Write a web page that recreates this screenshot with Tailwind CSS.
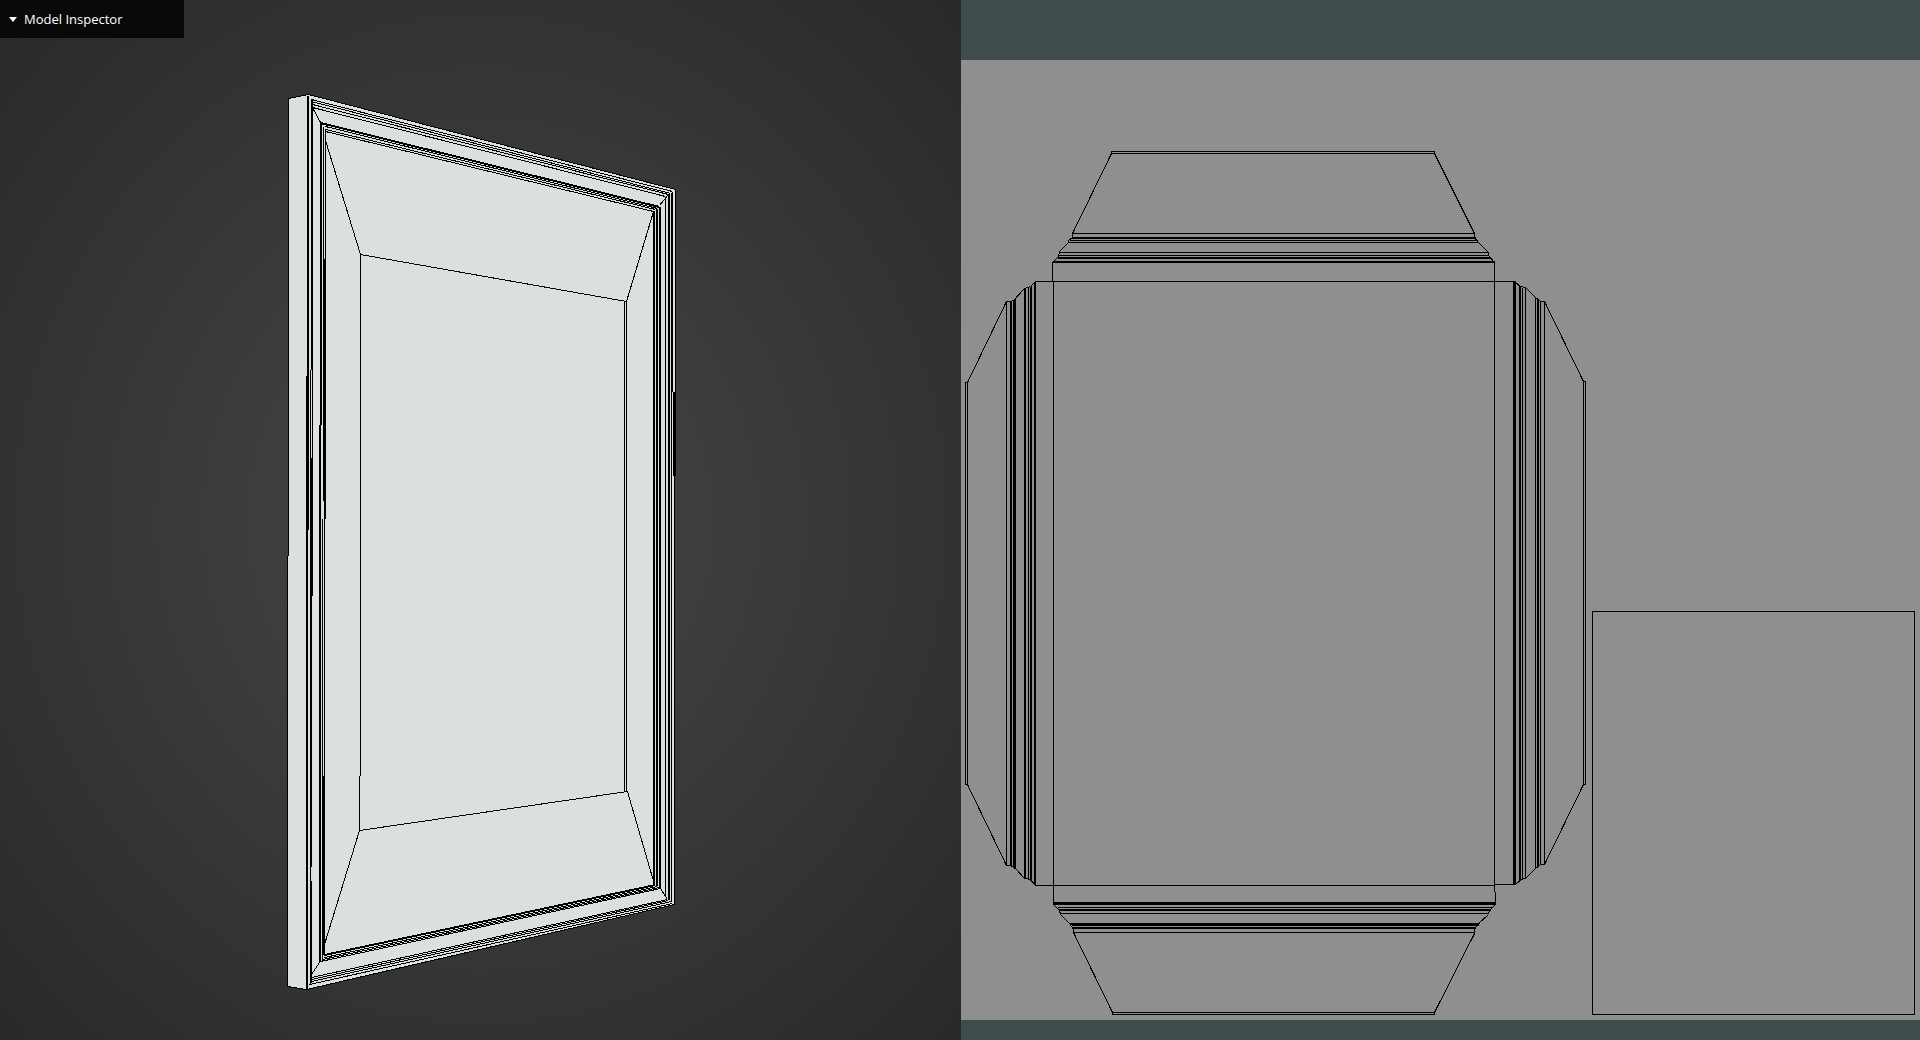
<!DOCTYPE html>
<html lang="en">
<head>
    <meta charset="UTF-8">
    <meta name="viewport" content="width=device-width, initial-scale=1.0">
    <title>Model Inspector</title>
    <script src="https://cdn.jsdelivr.net/npm/@tailwindcss/browser@4"></script>
</head>
<body class="bg-[#404c4c] font-['Open_Sans',sans-serif]">
    <main class="grid min-h-screen grid-cols-[961fr_959fr]">
        <!-- 3D view -->
        <section class="relative bg-radial from-[#484848] to-[#292929]">
            <button type="button" class="absolute top-0 left-0 flex h-[38px] w-[184px] items-center gap-[7px] bg-[#090909] pt-px pl-[9px] text-[13px] font-medium text-white">
                <svg class="h-[5px] w-2" viewBox="0 0 8 5" fill="currentColor" aria-hidden="true"><path d="M0 0h8L4 5z"/></svg>
                Model Inspector
            </button>
            <svg class="h-auto w-full" viewBox="0 0 961 1039" fill="none" stroke="#000" shape-rendering="crispEdges" role="img" aria-label="Framed panel wireframe">
                <g transform="translate(.5 .5)">
                    <path fill="#dae0e0" stroke="none" d="M288 98L308 94L675 189V475H674V904L306 989L287 986V555H288z"/>
                    <path fill="#e2e1e2" stroke="none" d="M313 110L319 121V961L313 970z"/>
                    <!-- Outer edge -->
                    <path d="M288 555V98L308 94L675 189V475M674 391V904L306 989L287 986V555"/>
                    <path d="M673 391V475"/>
                    <!-- Left mouldings -->
                    <path d="M307 95V988M308 95V529M306 375V988"/>
                    <path d="M311 98V369M312 98V595M310 369V984M311 457V866M311 880V975"/>
                    <path d="M320 122V960M321 122V424M319 424V962"/>
                    <path d="M323 126V500M325 129V518M324 258V954M322 518V960M323 775V954"/>
                    <!-- Right mouldings -->
                    <path d="M653 211V884M654 210V884M656 208V885M659 206V887M660 206V888M657 208V885"/>
                    <path d="M665 196V896M668 194V899M669 193V899M671 192V901M672 191V391"/>
                    <!-- Top mouldings -->
                    <path d="M311 99L672 191M311 101L670 193M312 104L668 194M312 107L665 196"/>
                    <path d="M320 122L659 206M320 123L659 207M325 126L657 208M325 129L655 209M325 131L653 211"/>
                    <!-- Bottom mouldings -->
                    <path d="M324 954L655 884M324 955L655 885M324 957L657 886M322 959L659 887M320 961L660 888"/>
                    <path d="M311 977L667 899M311 979L668 900M311 981L671 901M309 984L672 903"/>
                    <!-- Mitres -->
                    <path d="M311 99L313 109L320 122M659 205L668 194M319 962L311 974V982M660 888L667 899"/>
                    <!-- Sunken panel -->
                    <path d="M325 131V140L360 254L626 301L653 211M360 254V775M359 775V830L324 944M359 830L627 791L654 884M624 301V791M626 301V791"/>
                </g>
            </svg>
        </section>

        <!-- UV layout -->
        <section class="bg-[#404c4c] pt-15 pb-4">
            <svg class="h-auto w-full bg-[#8f8f8f]" viewBox="961 60 959 960" fill="none" stroke="#000" shape-rendering="crispEdges" role="img" aria-label="UV map">
                <g transform="translate(.5 .5)">
                    <!-- Back face -->
                    <path d="M1035 281H1515M1035 885H1494M1494 884H1515M1053 281V904M1494 262V891M1495 891V904"/>
                    <!-- Top flap -->
                    <path d="M1052 281V262L1058 256L1059 251L1068 242V240L1072 237V233L1111 153V151H1434V153L1474 233V237L1478 242L1488 252V255L1494 262"/>
                    <path d="M1111 153H1434M1072 233H1474M1072 237H1475M1071 238H1475M1069 240H1477M1068 242H1478M1059 252H1488M1058 255H1488M1057 257H1490M1057 258H1490M1053 261H1494M1052 262H1494"/>
                    <!-- Bottom flap -->
                    <path d="M1053 904L1059 910L1060 914L1069 923L1073 929V932L1112 1012V1014H1434V1012L1474 933V929L1478 923L1488 914L1489 910L1495 904"/>
                    <path d="M1053 902H1495M1053 903H1495M1053 904H1495M1057 907H1491M1058 909H1490M1059 910H1490M1059 913H1488M1069 923H1479M1070 924H1478M1071 925H1478M1072 927H1475M1072 928H1475M1073 932H1474M1112 1012H1434"/>
                    <!-- Left flap -->
                    <path d="M1035 281L1030 286L1024 288L1013 300L1010 301H1006L967 382H965V784H967L1006 865H1010L1015 868L1024 878L1030 879L1035 885"/>
                    <path d="M967 382V784M1006 301V865M1010 301V865M1011 301V865M1013 300V867M1014 299V868M1015 298V868M1024 288V878M1025 288V878M1028 287V878M1030 286V880M1031 285V881M1034 282V884M1035 281V885"/>
                    <!-- Right flap -->
                    <path d="M1515 282L1520 286L1525 287L1535 297L1540 301H1544L1583 381H1585V784H1583L1544 864H1540L1535 868L1525 878H1522L1515 884"/>
                    <path d="M1513 281V884M1514 281V884M1515 282V884M1519 285V881M1520 286V880M1522 287V879M1525 287V878M1535 297V868M1537 299V867M1538 300V866M1540 301V864M1544 301V864M1583 381V784"/>
                    <!-- Front panel -->
                    <path d="M1592 611H1914V1014H1592z"/>
                </g>
            </svg>
        </section>
    </main>
</body>
</html>
